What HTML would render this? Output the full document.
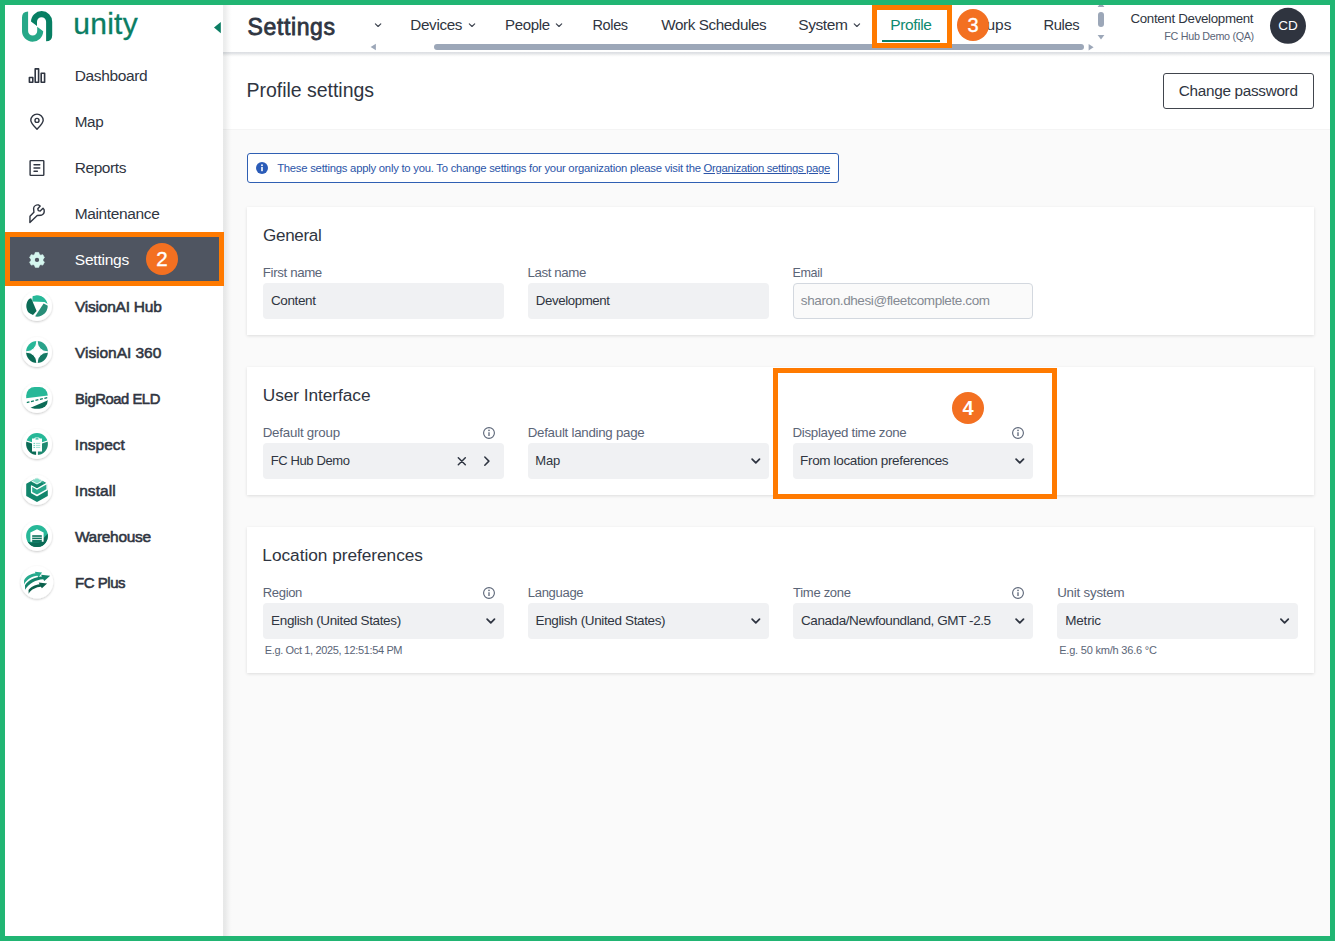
<!DOCTYPE html>
<html lang="en">
<head>
<meta charset="utf-8">
<title>Settings - Profile</title>
<style>
html,body{margin:0;padding:0;}
body{width:1335px;height:941px;overflow:hidden;position:relative;background:#fafafa;font-family:"Liberation Sans",sans-serif;}
.a{position:absolute;}
.t{position:absolute;white-space:nowrap;line-height:1;}
#frame{left:0;top:0;width:1325px;height:931px;border:5px solid #21b573;z-index:50;pointer-events:none;}
#side{left:5px;top:5px;width:218px;height:931px;background:#fff;z-index:3;}
#sidesh{left:223px;top:5px;width:9px;height:931px;z-index:3;background:linear-gradient(to right,rgba(30,40,40,.088) 0,rgba(30,40,40,.08) 25%,rgba(30,40,40,.04) 55%,rgba(30,40,40,.012) 80%,rgba(30,40,40,0) 100%);}
#head{left:223px;top:5px;width:1107px;height:47px;background:#fff;z-index:2;}
#headsh{left:223px;top:52px;width:1107px;height:5px;z-index:2;background:linear-gradient(to bottom,rgba(40,55,80,.17) 0,rgba(40,55,80,.13) 30%,rgba(40,50,60,.06) 60%,rgba(40,50,60,.02) 80%,rgba(0,0,0,0) 100%);}
#band{left:223px;top:52px;width:1107px;height:77px;background:#fff;border-bottom:1px solid #f4f4f4;z-index:1;}
.card{position:absolute;left:247px;width:1067px;background:#fff;box-shadow:0 1px 3px rgba(0,0,0,.12);z-index:1;}
.in{position:absolute;height:36px;width:241px;background:#f0f1f3;border-radius:4px;z-index:2;}
.ob{position:absolute;border:5px solid #ff7a00;box-sizing:border-box;z-index:20;}
.oc{position:absolute;width:32px;height:32px;border-radius:50%;background:#f37021;z-index:21;}
.on{position:absolute;z-index:22;color:#fff;white-space:nowrap;line-height:1;text-align:center;width:32px;}
#texts{position:absolute;left:0;top:0;z-index:12;}
svg{position:absolute;overflow:visible;}
.ic{z-index:11;}
</style>
</head>
<body>
<div id="frame" class="a"></div>
<div id="side" class="a"></div>
<div id="sidesh" class="a"></div>
<div id="head" class="a"></div>
<div id="headsh" class="a"></div>
<div id="band" class="a"></div>

<!-- selected nav item -->
<div class="a" style="left:10px;top:237px;width:209px;height:44px;background:#4f5561;z-index:4;"></div>

<!-- cards -->
<div class="card" style="top:207px;height:128px;"></div>
<div class="card" style="top:367px;height:128px;"></div>
<div class="card" style="top:527px;height:146px;"></div>

<!-- info banner -->
<div class="a" style="left:247px;top:153px;width:590px;height:28px;border:1px solid #2f5fb3;border-radius:3px;background:#fff;z-index:1;"></div>
<svg class="ic" style="left:256px;top:162px;" width="12" height="12" viewBox="0 0 12 12"><circle cx="6" cy="6" r="6" fill="#2b5cb8"/><rect x="5.2" y="5" width="1.6" height="4.2" fill="#fff"/><circle cx="6" cy="3.3" r="0.95" fill="#fff"/></svg>

<!-- change password button -->
<div class="a" style="left:1163px;top:73px;width:149px;height:34px;border:1px solid #41454d;border-radius:3px;background:#fff;z-index:2;"></div>

<!-- inputs -->
<div class="in" style="left:263px;top:283px;"></div>
<div class="in" style="left:528px;top:283px;"></div>
<div class="in" style="left:793px;top:283px;width:238px;height:34px;background:#fafafa;border:1px solid #d3d8df;"></div>
<div class="in" style="left:263px;top:443px;"></div>
<div class="in" style="left:528px;top:443px;"></div>
<div class="in" style="left:793px;top:443px;width:240px;"></div>
<div class="in" style="left:263px;top:603px;"></div>
<div class="in" style="left:528px;top:603px;"></div>
<div class="in" style="left:793px;top:603px;width:240px;"></div>
<div class="in" style="left:1057px;top:603px;"></div>

<svg class="ic" style="left:0;top:0;" width="1335" height="941" viewBox="0 0 1335 941" fill="none">
<!-- logo mark -->
<g id="lg">
<path d="M31 21.6 A10.6 10.6 0 0 1 52.2 21.8 L52.2 35.3 Q52.2 41.3 46.1 41.3 L46.1 21.8 A4.55 4.55 0 0 0 37 21.8 L37 26.1 Z" fill="#077f63"/>
<path d="M31 21.6 A10.6 10.6 0 0 1 52.2 21.8 L52.2 35.3 Q52.2 41.3 46.1 41.3 L46.1 21.8 A4.55 4.55 0 0 0 37 21.8 L37 26.1 Z" fill="#26a888" transform="rotate(180 37.1 26.4)"/>
</g>
<!-- collapse arrow -->
<path d="M214 27.6 L220.8 22 L220.8 33.2 Z" fill="#0b7d63"/>
<!-- dashboard -->
<g stroke="#2f3541" stroke-width="1.6" stroke-linejoin="round">
<rect x="29.4" y="77.5" width="3.4" height="4.8"/>
<rect x="35.2" y="68.9" width="3.4" height="13.4"/>
<rect x="41.2" y="73.2" width="3.4" height="9.1"/>
</g>
<!-- map pin -->
<g stroke="#2f3541" stroke-width="1.4" stroke-linejoin="round">
<path d="M37 129.2 C34.5 126.6 30.8 123.4 30.8 120.3 A6.2 6.2 0 0 1 43.2 120.3 C43.2 123.4 39.5 126.6 37 129.2 Z"/>
<circle cx="37" cy="120.4" r="2"/>
</g>
<!-- reports -->
<g stroke="#2f3541" stroke-width="1.4" stroke-linecap="round" stroke-linejoin="round">
<rect x="30.1" y="160.6" width="13.7" height="14.8" rx="0.6"/>
<path d="M34 164.7 H39.8 M34 168 H39.8 M34 171.3 H37.4"/>
</g>
<!-- wrench -->
<path d="M38.4 204.9 C36 204.6 33.9 206.2 33.6 208.3 L33.9 212.2 L30 216.3 L29.9 222.6 L37.2 215.5 L41 215.3 C43.3 214.6 44.6 212.3 44.1 209.6 L43 208.3 L40.2 211 L38.3 210.6 L37.8 208.7 L40.2 206 Z" stroke="#2f3541" stroke-width="1.4" stroke-linejoin="round"/>
<!-- gear -->
<g transform="translate(37 259.9) scale(0.9)">
<path d="M-1.9 -8.3 L1.9 -8.3 L2.6 -6.1 L4.2 -5.2 L6.4 -5.8 L8.2 -2.5 L6.7 -0.9 L6.7 0.9 L8.2 2.5 L6.4 5.8 L4.2 5.2 L2.6 6.1 L1.9 8.3 L-1.9 8.3 L-2.6 6.1 L-4.2 5.2 L-6.4 5.8 L-8.2 2.5 L-6.7 0.9 L-6.7 -0.9 L-8.2 -2.5 L-6.4 -5.8 L-4.2 -5.2 L-2.6 -6.1 Z" fill="#d5f6ef" stroke="#d5f6ef" stroke-width="0.8" stroke-linejoin="round"/>
<circle r="2.4" fill="#4f5561"/>
</g>
<!-- app icon backgrounds -->
<defs>
<filter id="sh" x="-30%" y="-30%" width="160%" height="160%"><feDropShadow dx="0" dy="1" stdDeviation="1" flood-color="#000" flood-opacity="0.22"/></filter>
<clipPath id="c1"><circle cx="37" cy="306" r="10.7"/></clipPath>
<clipPath id="c2"><circle cx="37" cy="352" r="10.9"/></clipPath>
<clipPath id="c3"><rect x="26.2" y="387" width="21.6" height="21.8" rx="8.5"/></clipPath>
<clipPath id="c4"><circle cx="37" cy="444" r="10.9"/></clipPath>
<clipPath id="c6"><circle cx="37" cy="536" r="10.9"/></clipPath>
</defs>
<g fill="#fff" filter="url(#sh)">
<circle cx="37" cy="306" r="15"/>
<circle cx="37" cy="352" r="15"/>
<circle cx="37" cy="398" r="15"/>
<circle cx="37" cy="444" r="15"/>
<circle cx="37" cy="490" r="15"/>
<circle cx="37" cy="536" r="15"/>
<circle cx="37" cy="582.2" r="16.2"/>
</g>
<!-- 1 VisionAI Hub -->
<g clip-path="url(#c1)">
<rect x="26" y="295" width="22" height="22" fill="#fff"/>
<path d="M32.3 301.6 L32.6 296 L38 294.5 L46 298 L48.5 304.5 L44.5 302 Z" fill="#27b898"/>
<path d="M31.2 298.2 L36.6 311 L33 315 L27 312 L25 304 L28 299 Z" fill="#0b6b56"/>
<path d="M43.6 303.6 L48.5 306 L47 313 L40 318 L35 316.5 Z" fill="#288e78"/>
</g>
<!-- 2 VisionAI 360 -->
<g clip-path="url(#c2)">
<rect x="26" y="341" width="11" height="11" fill="#27b898"/>
<rect x="37" y="341" width="11" height="11" fill="#2aa38b"/>
<rect x="26" y="352" width="11" height="11" fill="#0b6b56"/>
<rect x="37" y="352" width="11" height="11" fill="#167a65"/>
<path d="M37 340.5 Q37.6 351.4 48.5 352 Q37.6 352.6 37 363.5 Q36.4 352.6 25.5 352 Q36.4 351.4 37 340.5 Z" fill="#fff" stroke="#fff" stroke-width="1"/>
</g>
<!-- 3 BigRoad ELD -->
<g clip-path="url(#c3)">
<rect x="26" y="386" width="22" height="23" fill="#fff"/>
<path d="M26 386 H48 V395.4 L26 398.2 Z" fill="#27b898"/>
<path d="M48 400.2 V409 H30.5 V407.8 Z" fill="#0b6b56"/>
<path d="M26.5 402.6 L47.6 397.5" stroke="#0b7d63" stroke-width="1.3" stroke-dasharray="3 1.6"/>
</g>
<!-- 4 Inspect -->
<g clip-path="url(#c4)">
<rect x="26" y="433" width="22" height="22" fill="#fff"/>
<path d="M26 433 H48 V440.3 L42 442.3 V438.4 H32 V442.3 L26 440.3 Z" fill="#27b898"/>
<path d="M26 441.5 L32 443.5 V451.4 H36.1 V455 H26 Z" fill="#0b6b56"/>
<path d="M48 441.5 L42 443.5 V451.4 H37.9 V455 H48 Z" fill="#1f8a72"/>
<rect x="32.6" y="439" width="8.8" height="11.6" fill="#fff"/>
<path d="M35.8 443.4 H40.2 M35.8 445.4 H40.2 M35.8 447.4 H40.2" stroke="#9adfcf" stroke-width="0.9"/>
<path d="M33.6 443.4 H34.8 M33.6 445.4 H34.8 M33.6 447.4 H34.8" stroke="#27b898" stroke-width="0.9"/>
<rect x="34.4" y="437.4" width="5.2" height="3" rx="1.2" fill="#fff"/>
<rect x="35.4" y="438.3" width="3.2" height="1.3" rx="0.6" fill="#27b898"/>
</g>
<!-- 5 Install -->
<g>
<path d="M37 479 L46.8 484.4 V495.4 L37 500.9 L27.2 495.4 V484.4 Z" fill="#12856c" stroke="#12856c" stroke-width="2" stroke-linejoin="round"/>
<path d="M37 477.2 L43.6 480.9 L37 484.6 L31.2 481.4 Z" fill="#e9faf5"/>
<path d="M37 478.2 L41.6 480.8 L37 483.4 L32.4 480.8 Z" fill="#7fdcc6"/>
<path d="M31.6 486 L37 489 L47.2 483.2 V489.6 L37 495.6 L31.6 492.6 Z" fill="#fff" stroke="#fff" stroke-width="1.4" stroke-linejoin="round"/>
<path d="M32.2 487 L37 489.8 L46.4 484.4 V489.2 L37 494.6 L32.2 492 Z" fill="#2aa88d"/>
<path d="M41.4 481.6 L44.4 483.3" stroke="#2aa88d" stroke-width="1.6"/>
</g>
<!-- 6 Warehouse -->
<g clip-path="url(#c6)">
<rect x="26" y="525" width="22" height="22" fill="#27b898"/>
<path d="M26 541 L37 545 L48 533.5 V547 H26 Z" fill="#0b6b56"/>
<path d="M30.4 541.8 V532.6 L37 529.2 L43.6 532.6 V541.8 Z" fill="#fff"/>
<rect x="32.2" y="535.2" width="9.6" height="7.4" fill="#0f7560"/>
<path d="M32.2 537.3 H41.8 M32.2 539.5 H41.8" stroke="#fff" stroke-width="0.8"/>
<path d="M26 542.6 H48 V547 H26 Z" fill="#0b6b56"/>
</g>
<!-- 7 FC Plus -->
<g transform="translate(37 583) scale(1.07) translate(-37 -583)">
<path d="M24.9 584.4 L24.9 580.6 C26.4 577 31 574.6 35.6 574 L35 572.5 L41.7 573.1 L38.5 577.8 L37.4 576.3 C32.6 576.8 27.4 579.6 24.9 584.4 Z" fill="#27ab8e"/>
<path d="M25.9 589.4 L25.8 585.2 C28.4 580.8 34.6 577.6 41.6 577 L40.8 575.4 L49.3 576.2 L43.8 581.2 L42.8 579.6 C36 580 29.4 583.4 25.9 589.4 Z" fill="#13826a"/>
<path d="M29.2 593 L29.1 589.6 C31 586.8 35 584.6 39.4 584.2 L38.6 582.6 L46.4 583.4 L41.6 587.8 L40.6 586.6 C36.4 586.8 31.6 589 29.2 593 Z" fill="#0a5f4b"/>
</g>
<!-- tab chevrons -->
<g stroke="#3d434f" stroke-width="1.15" stroke-linecap="round" stroke-linejoin="round">
<path d="M375.4 23.8 L378.1 26.5 L380.8 23.8"/>
<path d="M469.3 23.8 L472 26.5 L474.7 23.8"/>
<path d="M556.3 23.8 L559 26.5 L561.7 23.8"/>
<path d="M854.2 23.8 L856.9 26.5 L859.6 23.8"/>
</g>
<!-- profile underline -->
<rect x="882" y="40" width="58" height="2" fill="#0a7e66"/>
<!-- scrollbars -->
<g fill="#9ca7b8">
<rect x="434" y="44" width="650" height="6" rx="3"/>
<path d="M370.6 47 L375.9 43.8 V50.2 Z"/>
<path d="M1093.6 47.2 L1088.6 44 V50.4 Z"/>
<rect x="1098" y="12" width="6" height="15" rx="3"/>
<path d="M1101 2.5 L1104.4 7 H1097.6 Z"/>
<path d="M1097.6 35.1 H1104.4 L1101 39.5 Z"/>
</g>
<!-- avatar -->
<circle cx="1288" cy="25.8" r="18" fill="#2f343f"/>
<!-- info outline icons -->
<g stroke="#5b6577" stroke-width="1.1">
<circle cx="489" cy="433" r="5.4"/><path d="M489 432.2 V436" stroke-width="1.3"/>
<circle cx="1018" cy="433" r="5.4"/><path d="M1018 432.2 V436" stroke-width="1.3"/>
<circle cx="489" cy="593" r="5.4"/><path d="M489 592.2 V596" stroke-width="1.3"/>
<circle cx="1018" cy="593" r="5.4"/><path d="M1018 592.2 V596" stroke-width="1.3"/>
</g>
<g fill="#5b6577">
<circle cx="489" cy="430.4" r="0.8"/><circle cx="1018" cy="430.4" r="0.8"/><circle cx="489" cy="590.4" r="0.8"/><circle cx="1018" cy="590.4" r="0.8"/>
</g>
<!-- clear x and chevron right -->
<g stroke="#2f3541" stroke-width="1.5" stroke-linecap="round" stroke-linejoin="round">
<path d="M458.3 457.7 L465.3 464.7 M465.3 457.7 L458.3 464.7"/>
<path d="M484.8 457 L488.9 461.1 L484.8 465.2"/>
</g>
<!-- dropdown chevrons -->
<g stroke="#2f3541" stroke-width="1.75" stroke-linecap="round" stroke-linejoin="round">
<path d="M752.1 459.2 L755.8 462.9 L759.5 459.2"/>
<path d="M1016.1 459.2 L1019.8 462.9 L1023.5 459.2"/>
<path d="M487.1 619.2 L490.8 622.9 L494.5 619.2"/>
<path d="M752.1 619.2 L755.8 622.9 L759.5 619.2"/>
<path d="M1016.1 619.2 L1019.8 622.9 L1023.5 619.2"/>
<path d="M1280.9 619.2 L1284.6 622.9 L1288.3 619.2"/>
</g>
</svg>


<div id="texts">
<div class="t" style="left:74.68px;top:68px;font-size:15.5px;letter-spacing:-0.369px;color:#2f3541;">Dashboard</div>
<div class="t" style="left:74.72px;top:114px;font-size:15.25px;letter-spacing:-0.335px;color:#2f3541;">Map</div>
<div class="t" style="left:74.68px;top:160px;font-size:15.5px;letter-spacing:-0.426px;color:#2f3541;">Reports</div>
<div class="t" style="left:74.68px;top:206px;font-size:15.5px;letter-spacing:-0.356px;color:#2f3541;">Maintenance</div>
<div class="t" style="left:74.82px;top:252px;font-size:15.5px;letter-spacing:-0.223px;color:#ffffff;">Settings</div>
<div class="t" style="left:74.96px;top:299px;font-size:15.5px;letter-spacing:-0.22px;color:#2f3541;-webkit-text-stroke:0.55px #2f3541;">VisionAI Hub</div>
<div class="t" style="left:74.96px;top:345px;font-size:15.5px;letter-spacing:-0.036px;color:#2f3541;-webkit-text-stroke:0.55px #2f3541;">VisionAI 360</div>
<div class="t" style="left:75.12px;top:392px;font-size:14.75px;letter-spacing:-0.42px;color:#2f3541;-webkit-text-stroke:0.55px #2f3541;">BigRoad ELD</div>
<div class="t" style="left:74.84px;top:437px;font-size:15.5px;letter-spacing:0.021px;color:#2f3541;-webkit-text-stroke:0.55px #2f3541;">Inspect</div>
<div class="t" style="left:74.84px;top:483px;font-size:15.5px;letter-spacing:0.055px;color:#2f3541;-webkit-text-stroke:0.55px #2f3541;">Install</div>
<div class="t" style="left:74.88px;top:529px;font-size:15.5px;letter-spacing:-0.31px;color:#2f3541;-webkit-text-stroke:0.55px #2f3541;">Warehouse</div>
<div class="t" style="left:75.04px;top:575px;font-size:15.0px;letter-spacing:-0.467px;color:#2f3541;-webkit-text-stroke:0.55px #2f3541;">FC Plus</div>
<div class="t" style="left:73.27px;top:9px;font-size:30px;letter-spacing:0.263px;color:#0b7d63;-webkit-text-stroke:0.3px #0b7d63;">unity</div>
<div class="t" style="left:247.6px;top:16px;font-size:23px;letter-spacing:0.602px;color:#2f3541;-webkit-text-stroke:0.8px #2f3541;">Settings</div>
<div class="t" style="left:410.31px;top:17px;font-size:15.25px;letter-spacing:-0.343px;color:#2f3541;">Devices</div>
<div class="t" style="left:505.08px;top:17px;font-size:15.0px;letter-spacing:-0.335px;color:#2f3541;">People</div>
<div class="t" style="left:592.52px;top:18px;font-size:14.5px;letter-spacing:-0.374px;color:#2f3541;">Roles</div>
<div class="t" style="left:661.31px;top:17px;font-size:15.25px;letter-spacing:-0.42px;color:#2f3541;">Work Schedules</div>
<div class="t" style="left:798.35px;top:17px;font-size:15.5px;letter-spacing:-0.44px;color:#2f3541;">System</div>
<div class="t" style="left:890.27px;top:17px;font-size:15.5px;letter-spacing:-0.381px;color:#0e8a6f;">Profile</div>
<div class="t" style="left:960.82px;top:17px;font-size:15.5px;letter-spacing:-0.044px;color:#2f3541;">Groups</div>
<div class="t" style="left:1043.58px;top:18px;font-size:14.75px;letter-spacing:-0.407px;color:#2f3541;">Rules</div>
<div class="t" style="left:1130.43px;top:12px;font-size:13.3px;letter-spacing:-0.306px;color:#2f3541;">Content Development</div>
<div class="t" style="left:1164.34px;top:31px;font-size:10.75px;letter-spacing:-0.301px;color:#5b6577;">FC Hub Demo (QA)</div>
<div class="t" style="left:1278.24px;top:19px;font-size:13.5px;letter-spacing:0.118px;color:#ffffff;">CD</div>
<div class="t" style="left:246.55px;top:81px;font-size:19.5px;letter-spacing:-0.026px;color:#2f3541;">Profile settings</div>
<div class="t" style="left:1178.84px;top:83px;font-size:15.3px;letter-spacing:-0.303px;color:#2f3541;">Change password</div>
<div class="t" style="left:263.07px;top:227px;font-size:17.05px;letter-spacing:-0.32px;color:#2f3541;">General</div>
<div class="t" style="left:262.86px;top:266px;font-size:13.3px;letter-spacing:-0.377px;color:#5b6577;">First name</div>
<div class="t" style="left:270.92px;top:294px;font-size:13.5px;letter-spacing:-0.374px;color:#2f3541;">Content</div>
<div class="t" style="left:527.47px;top:266px;font-size:13.3px;letter-spacing:-0.392px;color:#5b6577;">Last name</div>
<div class="t" style="left:535.86px;top:294px;font-size:13.25px;letter-spacing:-0.397px;color:#2f3541;">Development</div>
<div class="t" style="left:792.52px;top:267px;font-size:12.55px;letter-spacing:-0.362px;color:#5b6577;">Email</div>
<div class="t" style="left:800.86px;top:294px;font-size:13.5px;letter-spacing:-0.393px;color:#858a93;">sharon.dhesi@fleetcomplete.com</div>
<div class="t" style="left:262.74px;top:387px;font-size:17.3px;letter-spacing:-0.059px;color:#2f3541;">User Interface</div>
<div class="t" style="left:262.72px;top:426px;font-size:13.3px;letter-spacing:-0.209px;color:#5b6577;">Default group</div>
<div class="t" style="left:270.65px;top:454px;font-size:13.0px;letter-spacing:-0.38px;color:#2f3541;">FC Hub Demo</div>
<div class="t" style="left:527.72px;top:426px;font-size:13.3px;letter-spacing:-0.262px;color:#5b6577;">Default landing page</div>
<div class="t" style="left:535.32px;top:454px;font-size:13.0px;letter-spacing:-0.136px;color:#2f3541;">Map</div>
<div class="t" style="left:792.56px;top:426px;font-size:13.3px;letter-spacing:-0.306px;color:#5b6577;">Displayed time zone</div>
<div class="t" style="left:800.12px;top:454px;font-size:13.5px;letter-spacing:-0.347px;color:#2f3541;">From location preferences</div>
<div class="t" style="left:262.37px;top:547px;font-size:17.3px;letter-spacing:-0.041px;color:#2f3541;">Location preferences</div>
<div class="t" style="left:262.82px;top:586px;font-size:13.05px;letter-spacing:-0.369px;color:#5b6577;">Region</div>
<div class="t" style="left:271.1px;top:614px;font-size:13.5px;letter-spacing:-0.365px;color:#2f3541;">English (United States)</div>
<div class="t" style="left:264.8px;top:645px;font-size:11px;letter-spacing:-0.366px;color:#5b6577;">E.g. Oct 1, 2025, 12:51:54 PM</div>
<div class="t" style="left:527.82px;top:586px;font-size:13.05px;letter-spacing:-0.328px;color:#5b6577;">Language</div>
<div class="t" style="left:535.53px;top:614px;font-size:13.5px;letter-spacing:-0.363px;color:#2f3541;">English (United States)</div>
<div class="t" style="left:793.06px;top:586px;font-size:13.05px;letter-spacing:-0.305px;color:#5b6577;">Time zone</div>
<div class="t" style="left:800.95px;top:614px;font-size:13.5px;letter-spacing:-0.409px;color:#2f3541;">Canada/Newfoundland, GMT -2.5</div>
<div class="t" style="left:1057.15px;top:586px;font-size:13.3px;letter-spacing:-0.194px;color:#5b6577;">Unit system</div>
<div class="t" style="left:1065.14px;top:614px;font-size:13.5px;letter-spacing:-0.156px;color:#2f3541;">Metric</div>
<div class="t" style="left:1059.16px;top:645px;font-size:11px;letter-spacing:-0.202px;color:#5b6577;">E.g. 50 km/h 36.6 °C</div>
<div class="t" style="left:277.13px;top:163px;font-size:11.3px;letter-spacing:-0.242px;color:#2c55a8;">These settings apply only to you. To change settings for your organization please visit the</div>
<div class="t" style="left:703.59px;top:163px;font-size:11.3px;letter-spacing:-0.308px;color:#2c55a8;text-decoration:underline;">Organization settings page</div>
</div>

<!-- annotations -->
<div class="ob" style="left:5px;top:232px;width:219px;height:54px;"></div>
<div class="oc" style="left:146px;top:243px;"></div>
<div class="on" style="left:146px;top:248.5px;font-size:20.5px;-webkit-text-stroke:0.4px #fff;">2</div>

<div class="ob" style="left:872px;top:5px;width:80px;height:43px;"></div>
<div class="oc" style="left:956.5px;top:8.5px;"></div>
<div class="on" style="left:957px;top:14.5px;font-size:20px;-webkit-text-stroke:0.4px #fff;">3</div>

<div class="ob" style="left:773px;top:368px;width:284px;height:131px;"></div>
<div class="oc" style="left:952px;top:392px;"></div>
<div class="on" style="left:952px;top:397.5px;font-size:20px;font-weight:700;">4</div>
</body>
</html>
